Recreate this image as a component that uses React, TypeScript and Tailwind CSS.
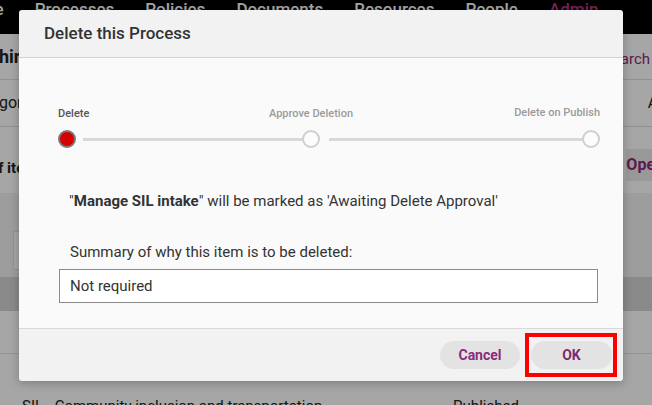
import React from 'react';

const navItems = ['Home', 'Processes', 'Policies', 'Documents', 'Resources', 'People'];

const StepDot: React.FC<{ active?: boolean }> = ({ active }) =>
  active ? (
    <span className="block h-[18px] w-[18px] shrink-0 rounded-full border-2 border-[#7a7a7a] bg-[#d60000]" />
  ) : (
    <span className="block h-[18px] w-[18px] shrink-0 rounded-full border-2 border-[#cfcfcf] bg-[#fcfcfc]" />
  );

export default function App() {
  return (
    <div className="relative h-[405px] w-[652px] overflow-hidden bg-white font-[Roboto,sans-serif] text-[#222]">
      {/* page behind the modal */}
      <nav className="flex h-[34px] gap-[31px] overflow-hidden bg-black text-[17px] font-medium leading-[18px] text-white">
        {navItems.map((n, i) => (
          <span key={n} className={i === 0 ? '-ml-[42px]' : ''}>
            {n}
          </span>
        ))}
        <span className="text-[#c0308c]">Admin</span>
      </nav>

      <div className="flex h-[46px] items-start justify-between border-b border-[#dedede]">
        <span className="-ml-[1px] mt-[9px] text-[18px] font-bold">hire Process</span>
        <span className="mr-[2px] mt-[14px] text-[15px] text-[#8b2a7b]">Search</span>
      </div>

      <div className="flex h-[47px] items-center justify-between border-b border-[#dedede] text-[16px]">
        <span className="-ml-[1px]">gories</span>
        <span className="-mr-[14px]">All</span>
      </div>

      <div className="flex h-[66px] items-start justify-between">
        <span className="-ml-[2px] mt-[30px] text-[15px] font-bold">f items</span>
        <span className="-mr-[12px] mt-[22px] bg-[#ececec] py-[4px] text-[16px] font-bold text-[#8b2a7b]">
          Open
        </span>
      </div>

      <div className="h-[84px] bg-[#f1f1f1] pl-[13px] pt-[38px]">
        <div className="h-[39px] w-[200px] border border-[#e2e2e2] bg-white" />
      </div>

      <div className="h-[34px] bg-[#d5d5d5]" />

      <div className="h-[43px] border-b border-[#e4e4e4]" />
      <div className="flex pl-[22px] pt-[40px] text-[15px] leading-[24px]">
        <span className="w-[431px] shrink-0">SIL - Community inclusion and transportation</span>
        <span>Published</span>
      </div>

      {/* modal */}
      <div className="absolute inset-0 bg-black/35 pl-[19px] pt-[10px]">
        <div className="w-[604px] overflow-hidden rounded-[3px] shadow-[0_2px_10px_rgba(0,0,0,0.25)]">
          <div className="flex h-[48px] items-center border-b border-[#d3d3d3] bg-[#f2f2f2] pl-[25px]">
            <h2 className="text-[17px] font-medium text-[#333]">Delete this Process</h2>
          </div>

          <div className="h-[270px] bg-[#fafafa] pl-[40px] pr-[25px] pt-[49px]">
            <div className="-ml-[1px] w-[542px]">
              <div className="flex text-[11px] font-medium leading-[13px]">
                <span className="w-[173px] text-[#555]">Delete</span>
                <span className="w-[160px] text-center text-[#9a9a9a]">Approve Deletion</span>
                <span className="-mt-[1px] flex-1 text-right text-[#9a9a9a]">Delete on Publish</span>
              </div>
              <div className="mt-[10px] flex items-center">
                <StepDot active />
                <div className="ml-[7px] h-[3px] w-[219px] bg-[#d8d8d8]" />
                <StepDot />
                <div className="ml-[9px] h-[3px] flex-1 bg-[#d8d8d8]" />
                <StepDot />
              </div>
            </div>

            <p className="mt-[43px] pl-[10px] text-[15px] leading-[20px] text-[#333]">
              "<span className="font-bold">Manage SIL intake</span>" will be marked as 'Awaiting Delete Approval'
            </p>
            <p className="mt-[31px] pl-[11px] text-[15px] leading-[20px] text-[#333]">
              Summary of why this item is to be deleted:
            </p>
            <div className="mt-[7px] flex h-[34px] items-center border border-[#8a8a8a] bg-white px-[10px] text-[15px] text-[#333]">
              Not required
            </div>
          </div>

          <div className="flex h-[53px] items-center justify-end gap-[11px] border-t border-[#d9d9d9] bg-[#f2f2f2] pr-[11px]">
            <button className="h-[28px] w-[80px] rounded-full bg-[#e3e3e3] text-[14px] font-bold text-[#8b2a7b]">
              Cancel
            </button>
            <div className="relative">
              <button className="h-[28px] w-[81px] rounded-full bg-[#e3e3e3] text-[14px] font-bold text-[#7e2a72]">
                OK
              </button>
              <span className="pointer-events-none absolute -bottom-[8px] -left-[6px] -right-[5px] -top-[8px] border-4 border-[#ff0000]" />
            </div>
          </div>
        </div>
      </div>
    </div>
  );
}
